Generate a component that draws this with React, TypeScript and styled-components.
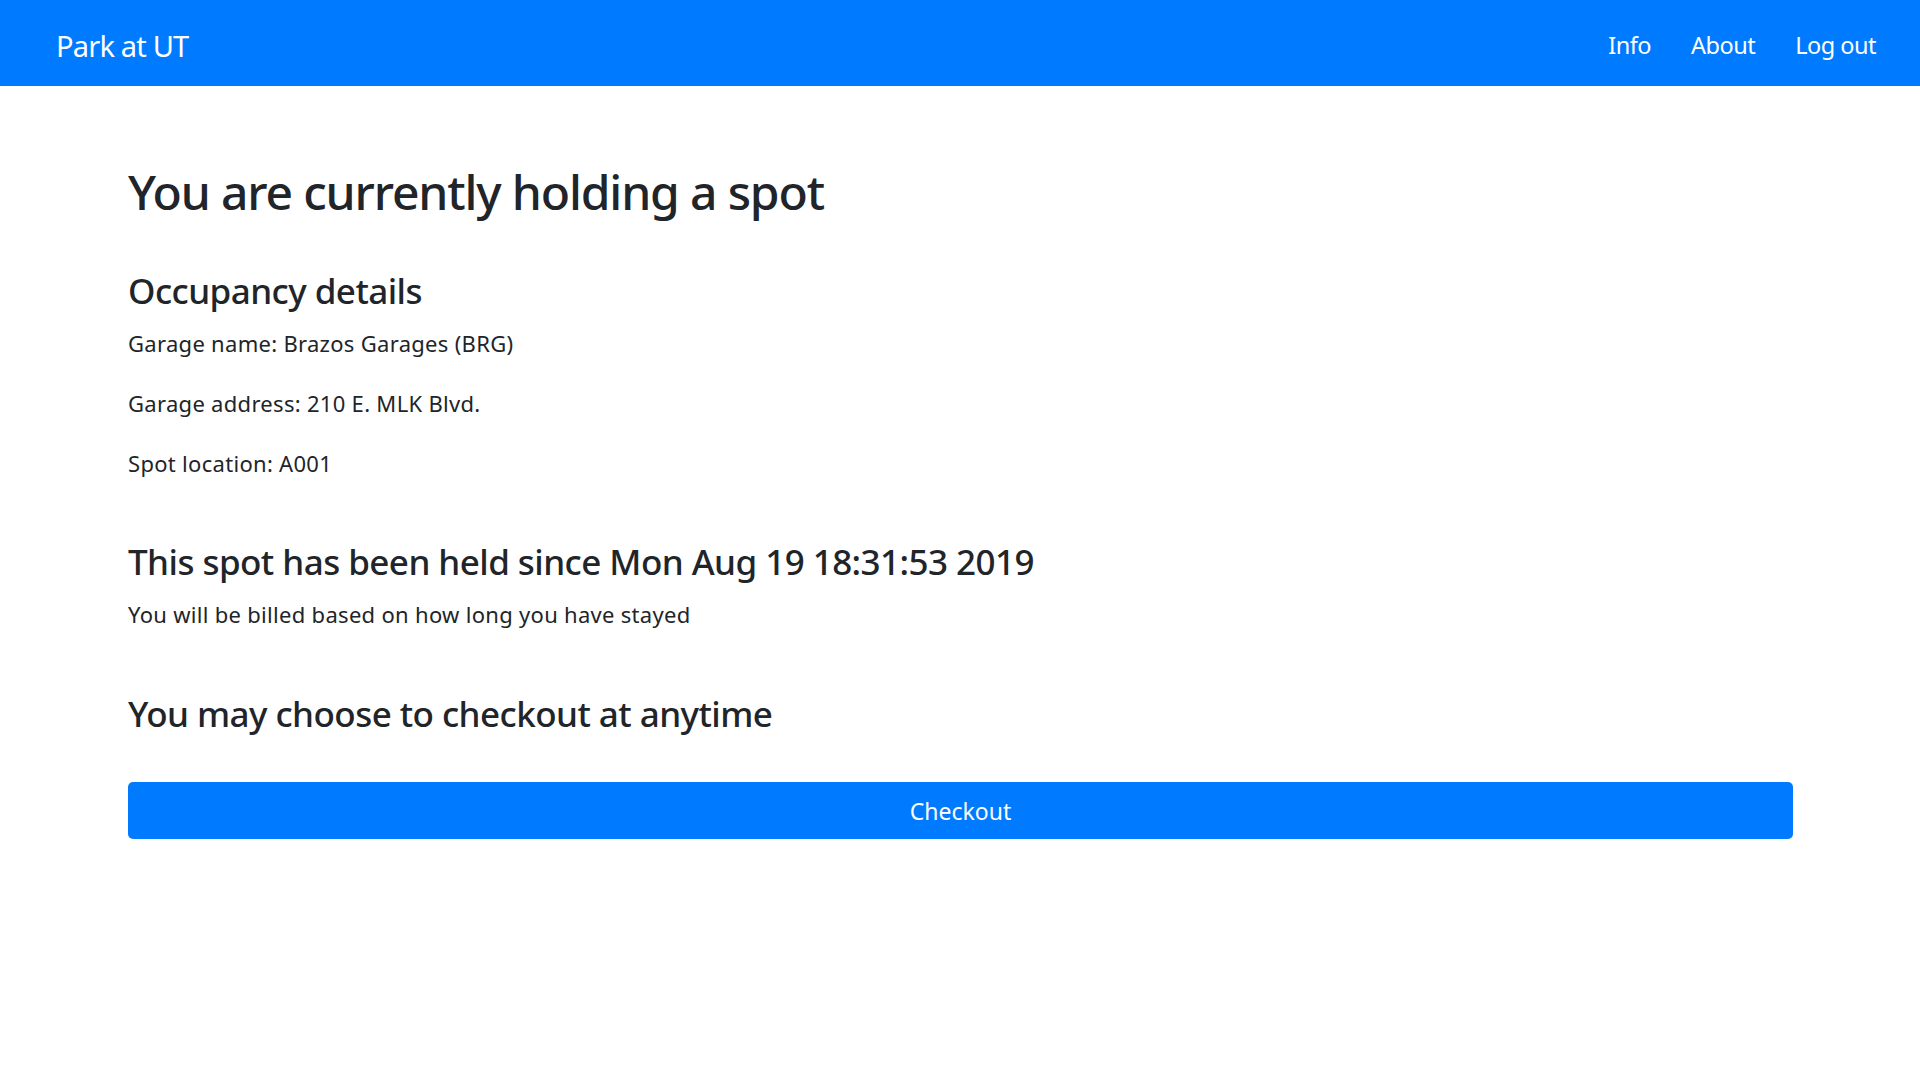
import React from 'react';
import styled, { createGlobalStyle } from 'styled-components';

const GlobalStyle = createGlobalStyle`
  html, body {
    margin: 0;
    padding: 0;
    background: #fff;
    font-family: 'Noto Sans', 'Open Sans', sans-serif;
    color: #212529;
  }
`;

const NavBar = styled.nav`
  height: 86px;
  background: #007bff;
  display: flex;
  align-items: center;
  justify-content: space-between;
  padding: 5px 24px 0 56px;
  box-sizing: border-box;
`;

const Brand = styled.a`
  color: #fff;
  font-size: 29px;
  letter-spacing: -0.8px;
  line-height: 1;
  text-decoration: none;
`;

const NavLinks = styled.div`
  display: flex;
  align-items: center;
`;

const NavLink = styled.a`
  color: #fff;
  font-size: 23.5px;
  letter-spacing: -0.5px;
  line-height: 1;
  padding: 0 20px;
  text-decoration: none;
  cursor: pointer;
`;

const Content = styled.main`
  margin: 0 127px 0 128px;
  padding-top: 76px;
  display: flex;
  flex-direction: column;
`;

const Title = styled.h1`
  margin: 0;
  font-size: 48px;
  letter-spacing: -1.15px;
  line-height: 60px;
  font-weight: 500;
`;

const Heading = styled.h3<{ $gap: number }>`
  margin: ${(p) => p.$gap}px 0 0;
  font-size: 35px;
  letter-spacing: -0.55px;
  line-height: 42px;
  font-weight: 500;
`;

const Line = styled.p<{ $gap: number }>`
  margin: ${(p) => p.$gap}px 0 0;
  padding-bottom: 4px;
  font-size: 22px;
  letter-spacing: 0.3px;
  line-height: 26px;
`;

const CheckoutButton = styled.button`
  margin-top: 47px;
  height: 57px;
  width: 100%;
  border: none;
  border-radius: 5px;
  background: #007bff;
  color: #fff;
  font-family: inherit;
  font-size: 23px;
  cursor: pointer;
`;

const details = [
  'Garage name: Brazos Garages (BRG)',
  'Garage address: 210 E. MLK Blvd.',
  'Spot location: A001',
];

export default function App() {
  return (
    <>
      <GlobalStyle />
      <NavBar>
        <Brand>Park at UT</Brand>
        <NavLinks>
          <NavLink>Info</NavLink>
          <NavLink>About</NavLink>
          <NavLink>Log out</NavLink>
        </NavLinks>
      </NavBar>
      <Content>
        <Title>You are currently holding a spot</Title>
        <Heading $gap={48}>Occupancy details</Heading>
        {details.map((text, i) => (
          <Line key={text} $gap={i === 0 ? 18 : 30}>
            {text}
          </Line>
        ))}
        <Heading $gap={61}>This spot has been held since Mon Aug 19 18:31:53 2019</Heading>
        <Line $gap={18}>You will be billed based on how long you have stayed</Line>
        <Heading $gap={62}>You may choose to checkout at anytime</Heading>
        <CheckoutButton>Checkout</CheckoutButton>
      </Content>
    </>
  );
}
